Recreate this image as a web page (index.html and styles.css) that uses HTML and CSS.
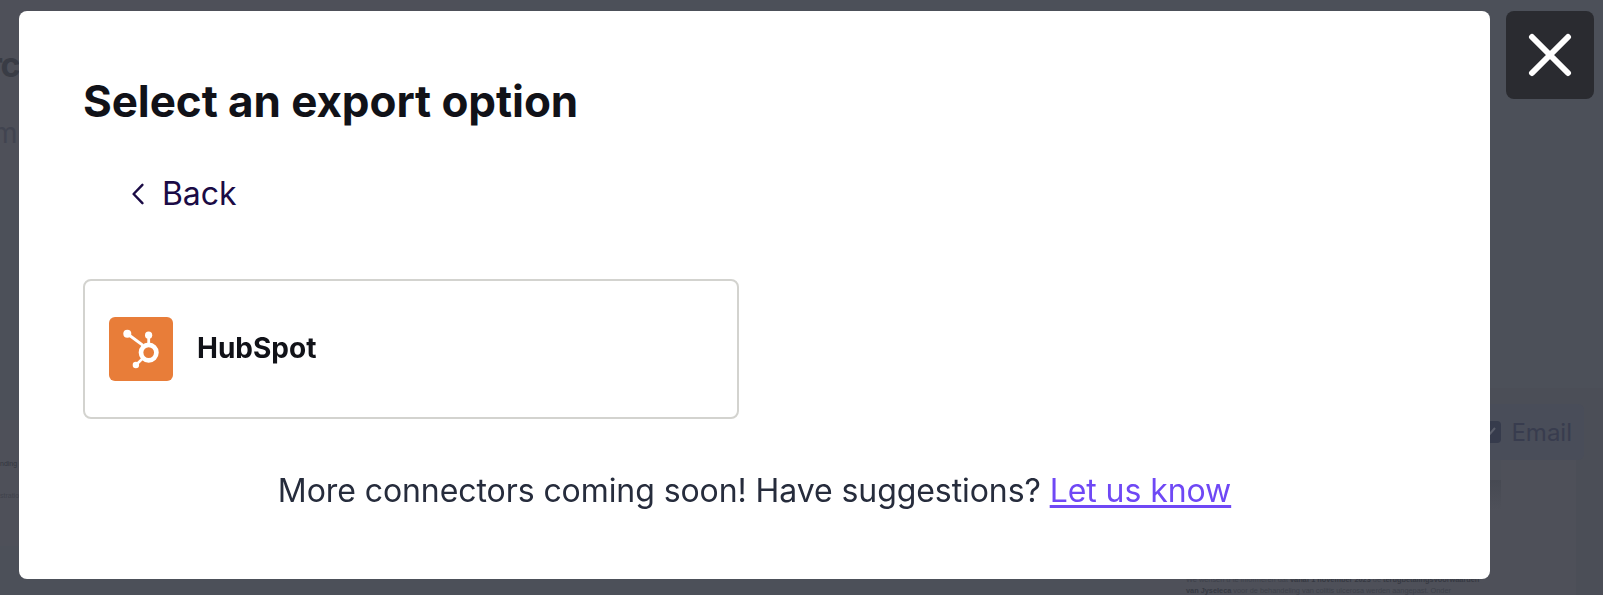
FILE: index.html
```html
<!DOCTYPE html>
<html lang="en">
<head>
    <meta charset="UTF-8">
    <meta name="viewport" content="width=device-width, initial-scale=1.0">
    <title>Select an export option</title>
    <link rel="stylesheet" href="styles.css">
</head>
<body>

    <!-- page under the dimmed overlay -->
    <div class="page" aria-hidden="true">
        <div class="page-left">
            <div class="page-header">
                <div class="page-title">rc</div>
                <div class="page-subtitle">m</div>
            </div>
            <div class="page-preview">
                <p class="preview-strong">nding co</p>
                <p>stration</p>
            </div>
        </div>
        <div class="page-right">
            <div class="channel">
                <svg class="channel-check" viewBox="0 0 22 22">
                    <rect width="22" height="22" rx="4" fill="#363b4c"/>
                    <path d="M5 11l4 4 7-8" fill="none" stroke="#5a5e6b" stroke-width="2"/>
                </svg>
                <span>Email</span>
            </div>
            <div class="document">
                <div class="document-bar"></div>
                <p>We wensen u te informeren dat <b>vanaf 1 november 2023</b> de <b>terugbetalingsvoorwaarden</b></p>
                <p><b>van Jyseleca</b> voor de behandeling van colitis ulcerosa werden aangepast. Onder</p>
            </div>
        </div>
    </div>

    <div class="overlay">
        <div class="modal" role="dialog" aria-labelledby="modalTitle">
            <h1 class="modal-title" id="modalTitle">Select an export option</h1>

            <button type="button" class="back-button">
                <svg class="back-icon" viewBox="0 0 12 22">
                    <path d="M10.4 1.8L1.6 11l8.8 9.2"/>
                </svg>
                Back
            </button>

            <button type="button" class="connector">
                <svg class="connector-logo" viewBox="0 0 64 64">
                    <rect width="64" height="64" rx="6" fill="#e87d39"/>
                    <g fill="none" stroke="#fff">
                        <circle cx="39.7" cy="35.6" r="7.7" stroke-width="4.7"/>
                        <path d="M18.3 16.8L34 28.4" stroke-width="3"/>
                        <path d="M39.7 18v10" stroke-width="2.8"/>
                        <path d="M27 48l6.7-6.7" stroke-width="2.6"/>
                    </g>
                    <g fill="#fff">
                        <circle cx="18.3" cy="16.7" r="4"/>
                        <circle cx="39.6" cy="18.2" r="3.6"/>
                        <circle cx="26.9" cy="48" r="3.2"/>
                    </g>
                </svg>
                <span>HubSpot</span>
            </button>

            <p class="modal-note">More connectors coming soon! Have suggestions? <a href="#">Let us know</a></p>
        </div>

        <button type="button" class="close-button" aria-label="Close">
            <svg class="close-icon" viewBox="0 0 44 44">
                <path d="M4 4l36 36M40 4L4 40"/>
            </svg>
        </button>
    </div>

</body>
</html>
```

FILE: styles.css
```css
* {
    box-sizing: border-box;
    margin: 0;
    padding: 0;
}

body {
    font-family: Inter, "Liberation Sans", sans-serif;
    background-color: #4c5059;
    height: 595px;
    overflow: hidden;
}

button {
    font-family: inherit;
    border: none;
    background: none;
    cursor: pointer;
}

/* Page behind the modal */

.page {
    display: flex;
    justify-content: space-between;
    height: 595px;
}

.page-left {
    width: 460px;
}

.page-header {
    display: flex;
    flex-direction: column;
    height: 190px;
    padding-top: 45px;
    background-color: #4e5059;
}

.page-title {
    font-size: 34px;
    line-height: 40px;
    font-weight: 700;
    letter-spacing: -1.5px;
    text-indent: -11px;
    color: #393c45;
}

.page-subtitle {
    margin-top: 28px;
    font-size: 28px;
    line-height: 40px;
    text-indent: -7px;
    color: #414450;
}

.page-preview {
    height: 126px;
    margin-top: 230px;
    padding-top: 38px;
    background-color: #4e5059;
    font-family: "Liberation Sans", Arial, sans-serif;
    font-size: 7px;
    line-height: 12px;
    color: #3f424b;
}

.page-preview p + p {
    margin-top: 20px;
}

.preview-strong {
    color: #33363f;
}

.page-right {
    width: 463px;
    margin-top: 388px;
    background-color: #4b4e57;
}

.channel {
    display: flex;
    align-items: center;
    justify-content: flex-end;
    gap: 10px;
    width: 444px;
    height: 56px;
    margin-top: 16px;
    padding-right: 12px;
    border-radius: 6px;
    background-color: #494d59;
    font-size: 24px;
    color: #383c4e;
}

.channel-check {
    width: 22px;
    height: 22px;
}

.document {
    width: 436px;
    height: 135px;
    padding-left: 46px;
    background-color: #4e5059;
    font-family: "Liberation Sans", Arial, sans-serif;
    font-size: 7.35px;
    line-height: 11px;
    color: #3d4049;
    white-space: nowrap;
}

.document b {
    color: #363942;
}

.document-bar {
    width: 315px;
    height: 50px;
    margin-bottom: 64px;
    border-top: 20px solid #4c4f58;
    background: linear-gradient(#464952, #4e5059);
}

/* Modal */

.overlay {
    position: fixed;
    inset: 0;
    display: flex;
    align-items: flex-start;
    gap: 16px;
    padding: 11px 9px 16px 19px;
}

.modal {
    display: flex;
    flex-direction: column;
    align-items: flex-start;
    width: 1471px;
    height: 568px;
    padding: 64px;
    border-radius: 8px;
    background-color: #fff;
}

.modal-title {
    font-size: 44px;
    line-height: 53px;
    font-weight: 650;
    letter-spacing: -0.08px;
    color: #111218;
}

.back-button {
    display: flex;
    align-items: center;
    gap: 18px;
    height: 48px;
    margin-top: 41px;
    padding-left: 49px;
    font-size: 32px;
    letter-spacing: -0.1px;
    color: #1b0b45;
}

.back-icon {
    width: 12px;
    height: 22px;
    margin-top: 1px;
    fill: none;
    stroke: #1b0b45;
    stroke-width: 2.4;
    stroke-linecap: round;
    stroke-linejoin: round;
}

.connector {
    display: flex;
    align-items: center;
    gap: 24px;
    width: 656px;
    height: 140px;
    margin-top: 62px;
    padding: 0 24px;
    border: 2px solid #d3d3cf;
    border-radius: 8px;
    font-size: 28px;
    font-weight: 650;
    color: #111218;
}

.connector span {
    padding-bottom: 2px;
}

.connector-logo {
    width: 64px;
    height: 64px;
}

.modal-note {
    align-self: center;
    margin-top: 48px;
    font-size: 32px;
    line-height: 48px;
    letter-spacing: -0.075px;
    color: #262c3c;
}

.modal-note a {
    color: #6f48f5;
    text-decoration-thickness: 3px;
    text-underline-offset: 3px;
    text-decoration-skip-ink: none;
}

.close-button {
    display: flex;
    align-items: center;
    justify-content: center;
    width: 88px;
    height: 88px;
    border-radius: 8px;
    background-color: #2a2b30;
}

.close-icon {
    width: 44px;
    height: 44px;
    stroke: #fff;
    stroke-width: 6;
    stroke-linecap: round;
}
```
